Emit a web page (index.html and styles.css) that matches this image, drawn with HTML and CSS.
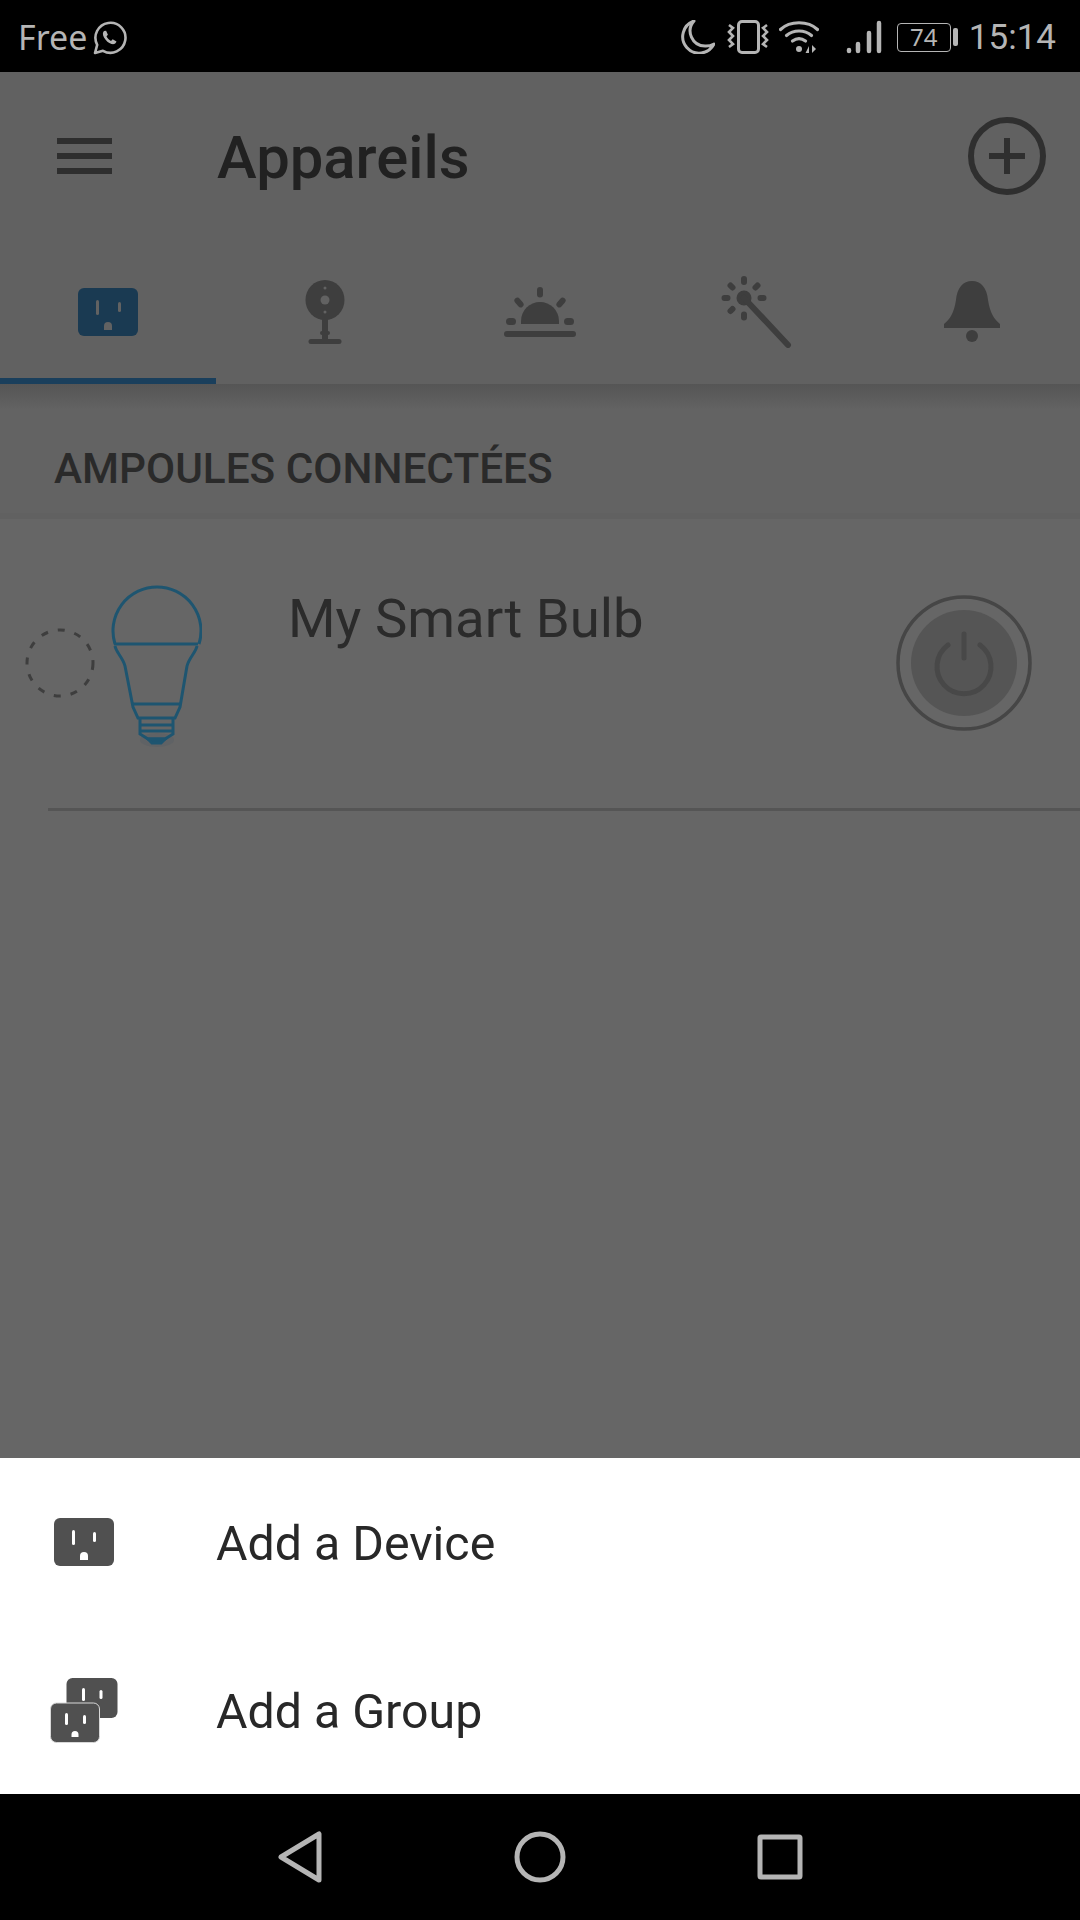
FILE: index.html
```html
<!DOCTYPE html>
<html lang="en">
<head>
    <meta charset="UTF-8">
    <meta name="viewport" content="width=device-width, initial-scale=1.0">
    <title>Appareils</title>
    <link rel="stylesheet" href="styles.css">
</head>
<body>
    <div class="screen">
        <div class="status-bar">
            <div class="status-left">
                <span class="carrier">Free</span>
                <svg class="status-icon" width="34" height="34" viewBox="0 0 34 34" fill="none" stroke="#b5b5b5" stroke-width="2.6">
                    <path d="M2 32l2.200-8.200A15 15 0 1 1 10 29.800z" stroke-linejoin="round"/>
                    <path d="M11 10c-1.500 1.500-1.500 3.500 0 6.500 2 3.500 4.500 5.500 7.500 6.500 2.500.6 4.500-.5 5-2.500l-3.800-2.200-1.700 1.600c-2-.8-3.600-2.500-4.500-4.600l1.400-1.600-1.800-4z" fill="#b5b5b5" stroke="none"/>
                </svg>
            </div>
            <div class="status-right">
                <svg width="34" height="34" viewBox="0 0 34 34">
                    <path d="M13 1A16.500 16.500 0 1 0 33 24 17 17 0 0 1 24 26 15 15 0 0 1 13 1z" fill="none" stroke="#b5b5b5" stroke-width="3" stroke-linejoin="round"/>
                </svg>
                <svg class="gap-vibrate" width="42" height="34" viewBox="0 0 42 34" fill="none" stroke="#b5b5b5">
                    <rect x="11.500" y="1.500" width="20" height="31" rx="3.500" stroke-width="3"/>
                    <path d="M2 5l4 3-4 4 4 4-4 4 4 4-4 3M40 5l-4 3 4 4-4 4 4 4-4 4 4 3" stroke-width="2.600"/>
                </svg>
                <svg class="gap-wifi" width="40" height="34" viewBox="0 0 40 34" fill="none" stroke="#b5b5b5" stroke-width="3.200" stroke-linecap="round">
                    <path d="M1.500 9.500C11 .5 29 .5 38.500 9.500"/>
                    <path d="M7.500 15.500c7-6 18-6 25 0"/>
                    <path d="M13.500 21c4-3 9-3 13 0"/>
                    <circle cx="20" cy="29" r="3" fill="#b5b5b5" stroke="none"/>
                    <path d="M30 33v-7l-3.500 7zM33 25v8l4-4z" fill="#b5b5b5" stroke="none"/>
                </svg>
                <svg class="gap-signal" width="36" height="34" viewBox="0 0 36 34" stroke="#b5b5b5" stroke-width="4.500" stroke-linecap="round">
                    <path d="M3 30v1M12 24v7M23 13v18M33 3v28"/>
                </svg>
                <div class="battery">
                    <div class="battery-body">74</div>
                    <div class="battery-nub"></div>
                </div>
                <span class="clock">15:14</span>
            </div>
        </div>

        <div class="app-bar">
            <div class="hamburger"><i></i><i></i><i></i></div>
            <h1>Appareils</h1>
            <svg class="add-button" width="78" height="78" viewBox="0 0 78 78" fill="none" stroke="#2f2f2f" stroke-width="6">
                <circle cx="39" cy="39" r="36"/>
                <path d="M39 21v36M21 39h36"/>
            </svg>
        </div>

        <div class="tabs">
            <div class="tab active">
                <svg width="60" height="48" viewBox="0 0 60 48">
                    <rect width="60" height="48" rx="6" fill="#1a3a52"/>
                    <rect x="18" y="12" width="3" height="15" rx="1.500" fill="#626262"/>
                    <rect x="40" y="14" width="3" height="10" rx="1.500" fill="#626262"/>
                    <path d="M26 42v-4a4 4 0 0 1 8 0v4z" fill="#626262"/>
                </svg>
            </div>
            <div class="tab">
                <svg class="camera" width="40" height="64" viewBox="0 0 40 64" fill="#3e3e3e">
                    <ellipse cx="20" cy="20" rx="19.500" ry="20"/>
                    <rect x="17" y="36" width="6" height="26"/>
                    <rect x="15" y="51" width="10" height="4" rx="2"/>
                    <rect x="3.500" y="59" width="33" height="5" rx="2.500"/>
                    <ellipse cx="20" cy="20" rx="4.500" ry="4.500" fill="#626262"/>
                    <circle cx="20" cy="8" r="1.500" fill="#626262"/>
                    <circle cx="20" cy="32" r="1.500" fill="#626262"/>
                </svg>
            </div>
            <div class="tab">
                <svg width="72" height="50" viewBox="0 0 72 50" fill="#3e3e3e">
                    <path d="M17 37v-3a19 19 0 0 1 38 0v3z"/>
                    <rect y="44" width="72" height="6" rx="3"/>
                    <rect x="33" width="6" height="10.500" rx="3"/>
                    <rect x="2" y="31" width="10" height="7" rx="3.500"/>
                    <rect x="60" y="31" width="10" height="7" rx="3.500"/>
                    <rect x="12" y="10" width="6" height="11" rx="3" transform="rotate(-40 15 15.500)"/>
                    <rect x="54" y="10" width="6" height="11" rx="3" transform="rotate(40 57 15.500)"/>
                </svg>
            </div>
            <div class="tab">
                <svg width="72" height="72" viewBox="0 0 72 72" fill="#3e3e3e">
                    <circle cx="24" cy="22" r="7.500"/>
                    <path d="M24 22l44 47" stroke="#3e3e3e" stroke-width="6" stroke-linecap="round"/>
                    <g stroke="#3e3e3e" stroke-width="6" stroke-linecap="round">
                        <path d="M24 3v3M24 38.500v3M4.500 22h3M40.500 22h3M10.500 9.500l2 2M37.500 9.500l-2 2M10.500 35l2-2"/>
                    </g>
                </svg>
            </div>
            <div class="tab">
                <svg width="56" height="62" viewBox="0 0 56 62" fill="#3e3e3e">
                    <path d="M0 47v-4c6-5 10-11 12-24C13 7 19 0 28 0s15 7 16 19c2 13 6 19 12 24v4z"/>
                    <circle cx="28" cy="55" r="6"/>
                </svg>
            </div>
        </div>

        <div class="section-title">AMPOULES CONNECTÉES</div>

        <div class="device-row">
            <div class="device-left">
                <svg class="dashed-ring" width="70" height="70" viewBox="0 0 70 70" fill="none" stroke="#3e3e3e" stroke-width="3" stroke-dasharray="7 10">
                    <circle cx="35" cy="35" r="33"/>
                </svg>
                <svg class="bulb" width="92" height="164" viewBox="0 0 92 164" fill="none" stroke="#1e5570" stroke-width="3">
                    <ellipse cx="47" cy="156" rx="17" ry="7" fill="#5f6265" stroke="none"/>
                    <path d="M5 60A44 44 0 1 1 89 60M4 60h84" stroke-linejoin="round"/>
                    <path d="M5 62c1 6 8 12 10 20l8 41 5 11h37l5-11 7-41c2-8 9-14 10-20"/>
                    <path d="M23 120h47"/>
                    <path d="M30 134v16l8 5h17l8-5v-16M30 141h33M30 147h33"/>
                    <path d="M38 155l4 4h9l4-4z" fill="#1e5570"/>
                </svg>
            </div>
            <div class="device-name">My Smart Bulb</div>
            <svg class="power" width="136" height="136" viewBox="0 0 136 136" fill="none">
                <circle cx="68" cy="68" r="66" stroke="#464646" stroke-width="3.500"/>
                <circle cx="68" cy="68" r="53" fill="#555555"/>
                <path d="M52 50a27 27 0 1 0 32 0" stroke="#484848" stroke-width="5" stroke-linecap="round"/>
                <path d="M68 39v24" stroke="#484848" stroke-width="5" stroke-linecap="round"/>
            </svg>
        </div>
        <div class="divider"></div>

        <div class="spacer"></div>

        <div class="sheet">
            <div class="sheet-row">
                <svg width="60" height="48" viewBox="0 0 60 48">
                    <rect width="60" height="48" rx="6" fill="#505050"/>
                    <rect x="18" y="12" width="3" height="15" rx="1.500" fill="#fff"/>
                    <rect x="39" y="14" width="3" height="10" rx="1.500" fill="#fff"/>
                    <path d="M26 42v-4a4 4 0 0 1 8 0v4z" fill="#fff"/>
                </svg>
                <span>Add a Device</span>
            </div>
            <div class="sheet-row">
                <svg class="group-icon" width="68" height="65" viewBox="0 0 68 65">
                    <rect x="16.500" width="51" height="40" rx="6" fill="#505050"/>
                    <rect x="32" y="10" width="3" height="13" rx="1.500" fill="#fff"/>
                    <rect x="49.500" y="12" width="3" height="9" rx="1.500" fill="#fff"/>
                    <rect x="0.500" y="25" width="49" height="39.500" rx="6" fill="#505050" stroke="#d8d8d8" stroke-width="1"/>
                    <rect x="15" y="35" width="3" height="12" rx="1.500" fill="#fff"/>
                    <rect x="33" y="37" width="3" height="9" rx="1.500" fill="#fff"/>
                    <path d="M21.500 59v-2.500a3.500 3.500 0 0 1 7 0V59z" fill="#fff"/>
                </svg>
                <span>Add a Group</span>
            </div>
        </div>

        <div class="nav-bar">
            <svg width="44" height="52" viewBox="0 0 44 52" fill="none" stroke="#b5b5b5" stroke-width="5" stroke-linejoin="round">
                <path d="M41 3v46L3 26z"/>
            </svg>
            <svg width="52" height="52" viewBox="0 0 52 52" fill="none" stroke="#b5b5b5" stroke-width="5">
                <circle cx="26" cy="26" r="23"/>
            </svg>
            <svg width="46" height="46" viewBox="0 0 46 46" fill="none" stroke="#b5b5b5" stroke-width="5" stroke-linejoin="round">
                <rect x="3" y="3" width="40" height="40" rx="1"/>
            </svg>
        </div>
    </div>
</body>
</html>
```

FILE: styles.css
```css
body {
    margin: 0;
    padding: 0;
    font-family: Roboto, sans-serif;
    background-color: #666666;
}
.screen {
    width: 1080px;
    height: 1920px;
    display: flex;
    flex-direction: column;
    overflow: hidden;
}

/* status bar */
.status-bar {
    height: 72px;
    flex-shrink: 0;
    background-color: #000;
    color: #b5b5b5;
    display: flex;
    justify-content: space-between;
    align-items: center;
    padding: 2px 24px 0 18px;
    box-sizing: border-box;
    font-family: "Noto Sans", sans-serif;
    font-size: 34px;
}
.status-left, .status-right {
    display: flex;
    align-items: center;
}
.status-left {
    gap: 6px;
}
.status-icon {
    margin-top: 1px;
}
.gap-vibrate { margin-left: 12px; }
.gap-wifi { margin-left: 10px; }
.gap-signal { margin-left: 27px; }
.battery {
    display: flex;
    align-items: center;
    gap: 2px;
    margin-left: 15px;
}
.battery-body {
    width: 54px;
    height: 29px;
    border: 1.500px solid #b5b5b5;
    border-radius: 4px;
    box-sizing: border-box;
    font-size: 24px;
    line-height: 26px;
    text-align: center;
}
.battery-nub {
    width: 5px;
    height: 18px;
    border-radius: 2px;
    background-color: #b5b5b5;
}
.clock {
    margin-left: 11px;
    font-family: Roboto, sans-serif;
    font-size: 35px;
}

/* app bar */
.app-bar {
    height: 168px;
    flex-shrink: 0;
    background-color: #616161;
    display: flex;
    align-items: center;
    padding: 0 34px 0 57px;
    box-sizing: border-box;
}
.hamburger {
    width: 55px;
    display: flex;
    flex-direction: column;
    gap: 9px;
}
.hamburger i {
    display: block;
    height: 6px;
    background-color: #2e2e2e;
}
.app-bar h1 {
    flex: 1;
    margin: 3px 0 0 105px;
    font-size: 59.800px;
    font-weight: 500;
    color: #212121;
}

/* tabs */
.tabs {
    height: 144px;
    flex-shrink: 0;
    background-color: #616161;
    display: flex;
}
.tab {
    width: 216px;
    height: 144px;
    display: flex;
    justify-content: center;
    align-items: center;
}
.tab.active {
    box-shadow: inset 0 -6px 0 #1a3f5c;
}
.camera {
    margin-left: 2px;
}

/* list */
.section-title {
    height: 135px;
    flex-shrink: 0;
    background: linear-gradient(#555555, #636363 26px);
    border-bottom: 6px solid #616161;
    box-sizing: border-box;
    padding: 40px 0 0 54px;
    display: flex;
    align-items: center;
    font-size: 42.300px;
    font-weight: 500;
    color: #2a2a2a;
}
.device-row {
    height: 289px;
    flex-shrink: 0;
    display: flex;
    box-sizing: border-box;
    padding: 65px 48px 0 25px;
}
.device-left {
    width: 263px;
    flex-shrink: 0;
    display: flex;
    gap: 15px;
}
.dashed-ring {
    margin-top: 44px;
}
.device-name {
    flex: 1;
    font-size: 54.500px;
    color: #2b2b2b;
    line-height: 60px;
    margin-top: 4px;
}
.power {
    margin-top: 11px;
}
.divider {
    height: 3px;
    margin-left: 48px;
    flex-shrink: 0;
    background-color: #555555;
}
.spacer {
    flex: 1;
}

/* bottom sheet */
.sheet {
    background-color: #fff;
    flex-shrink: 0;
}
.sheet-row {
    height: 168px;
    display: flex;
    align-items: center;
    padding-left: 54px;
    font-size: 48.300px;
    color: #282828;
}
.sheet-row span {
    margin-top: 2px;
}
.sheet-row svg {
    width: 60px;
    margin-right: 102px;
}
.sheet-row .group-icon {
    width: 68px;
    margin-left: -4px;
    margin-right: 98px;
}

/* nav bar */
.nav-bar {
    height: 126px;
    flex-shrink: 0;
    background-color: #000;
    display: grid;
    grid-template-columns: repeat(3, 240px);
    justify-content: center;
    justify-items: center;
    align-items: center;
}
```
